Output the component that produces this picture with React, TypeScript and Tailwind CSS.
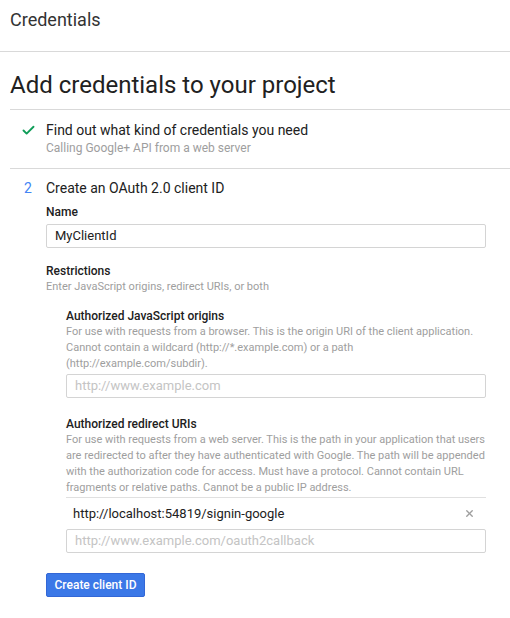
import { Check, X } from "lucide-react";

const font = { fontFamily: "Roboto, Arial, sans-serif" };

function Field({ value, placeholder }: { value?: string; placeholder?: string }) {
  return (
    <div className="h-[24px] border border-[#d4d4d4] rounded-[2px] flex items-center px-[8px] text-[13px]">
      {value ? (
        <span className="text-[#212121]">{value}</span>
      ) : (
        <span className="text-[#c4c4c4]">{placeholder}</span>
      )}
    </div>
  );
}

export default function App() {
  return (
    <div className="w-[510px] h-[618px] bg-white text-[#212121]" style={font}>
      <div className="h-[52px] border-b border-[#d9d9d9] px-[10px] pt-[8px]">
        <h1 className="text-[18px] leading-[24px] text-[#333]">Credentials</h1>
      </div>

      <div className="pl-[10px]">
        <div className="border-b border-[#d9d9d9] pt-[17px] pb-[8px]">
          <h2 className="text-[24px] leading-[32px] text-[#212121]">Add credentials to your project</h2>
        </div>

        <div className="border-b border-[#d9d9d9] pt-[10px] pb-[12px] flex">
          <div className="w-[36px] pl-[11px] pt-[3px]">
            <Check size={15} strokeWidth={3} className="text-[#0f9d58]" />
          </div>
          <div>
            <p className="text-[14px] leading-[20px] text-[#212121]">Find out what kind of credentials you need</p>
            <p className="text-[12px] leading-[16px] text-[#9e9e9e]">Calling Google+ API from a web server</p>
          </div>
        </div>

        <div className="pt-[9px] flex">
          <div className="w-[36px] pl-[14px] text-[14px] leading-[20px] text-[#4285f4]">2</div>
          <div className="w-[440px]">
            <p className="text-[14px] leading-[20px] text-[#212121]">Create an OAuth 2.0 client ID</p>

            <p className="mt-[6px] text-[12px] leading-[16px] font-medium text-[#212121]">Name</p>
            <div className="mt-[4px]">
              <Field value="MyClientId" />
            </div>

            <p className="mt-[15px] text-[12px] leading-[16px] font-medium text-[#212121]">Restrictions</p>
            <p className="text-[11px] leading-[16px] text-[#9e9e9e]">Enter JavaScript origins, redirect URIs, or both</p>

            <div className="ml-[20px]">
              <p className="mt-[13px] text-[12px] leading-[16px] font-medium text-[#212121]">Authorized JavaScript origins</p>
              <p className="text-[11px] leading-[16px] text-[#9e9e9e]">
                For use with requests from a browser. This is the origin URI of the client application. Cannot contain a
                wildcard (http://*.example.com) or a path (http://example.com/subdir).
              </p>
              <div className="mt-[2px]">
                <Field placeholder="http://www.example.com" />
              </div>

              <p className="mt-[18px] text-[12px] leading-[16px] font-medium text-[#212121]">Authorized redirect URIs</p>
              <p className="text-[11px] leading-[16px] text-[#9e9e9e]">
                For use with requests from a web server. This is the path in your application that users are redirected to
                after they have authenticated with Google. The path will be appended with the authorization code for
                access. Must have a protocol. Cannot contain URL fragments or relative paths. Cannot be a public IP address.
              </p>
              <div className="mt-[1px] border-t border-[#e0e0e0] h-[32px] flex items-center justify-between pl-[7px] pr-[11px]">
                <span className="text-[13px] text-[#212121]">http://localhost:54819/signin-google</span>
                <X size={11} strokeWidth={3} className="text-[#9e9e9e]" />
              </div>
              <Field placeholder="http://www.example.com/oauth2callback" />
            </div>

            <button className="mt-[20px] h-[24px] w-[99px] rounded-[2px] bg-[#3b78e7] border border-[#3367d6] text-white text-[12px] font-medium">
              Create client ID
            </button>
          </div>
        </div>
      </div>
    </div>
  );
}
